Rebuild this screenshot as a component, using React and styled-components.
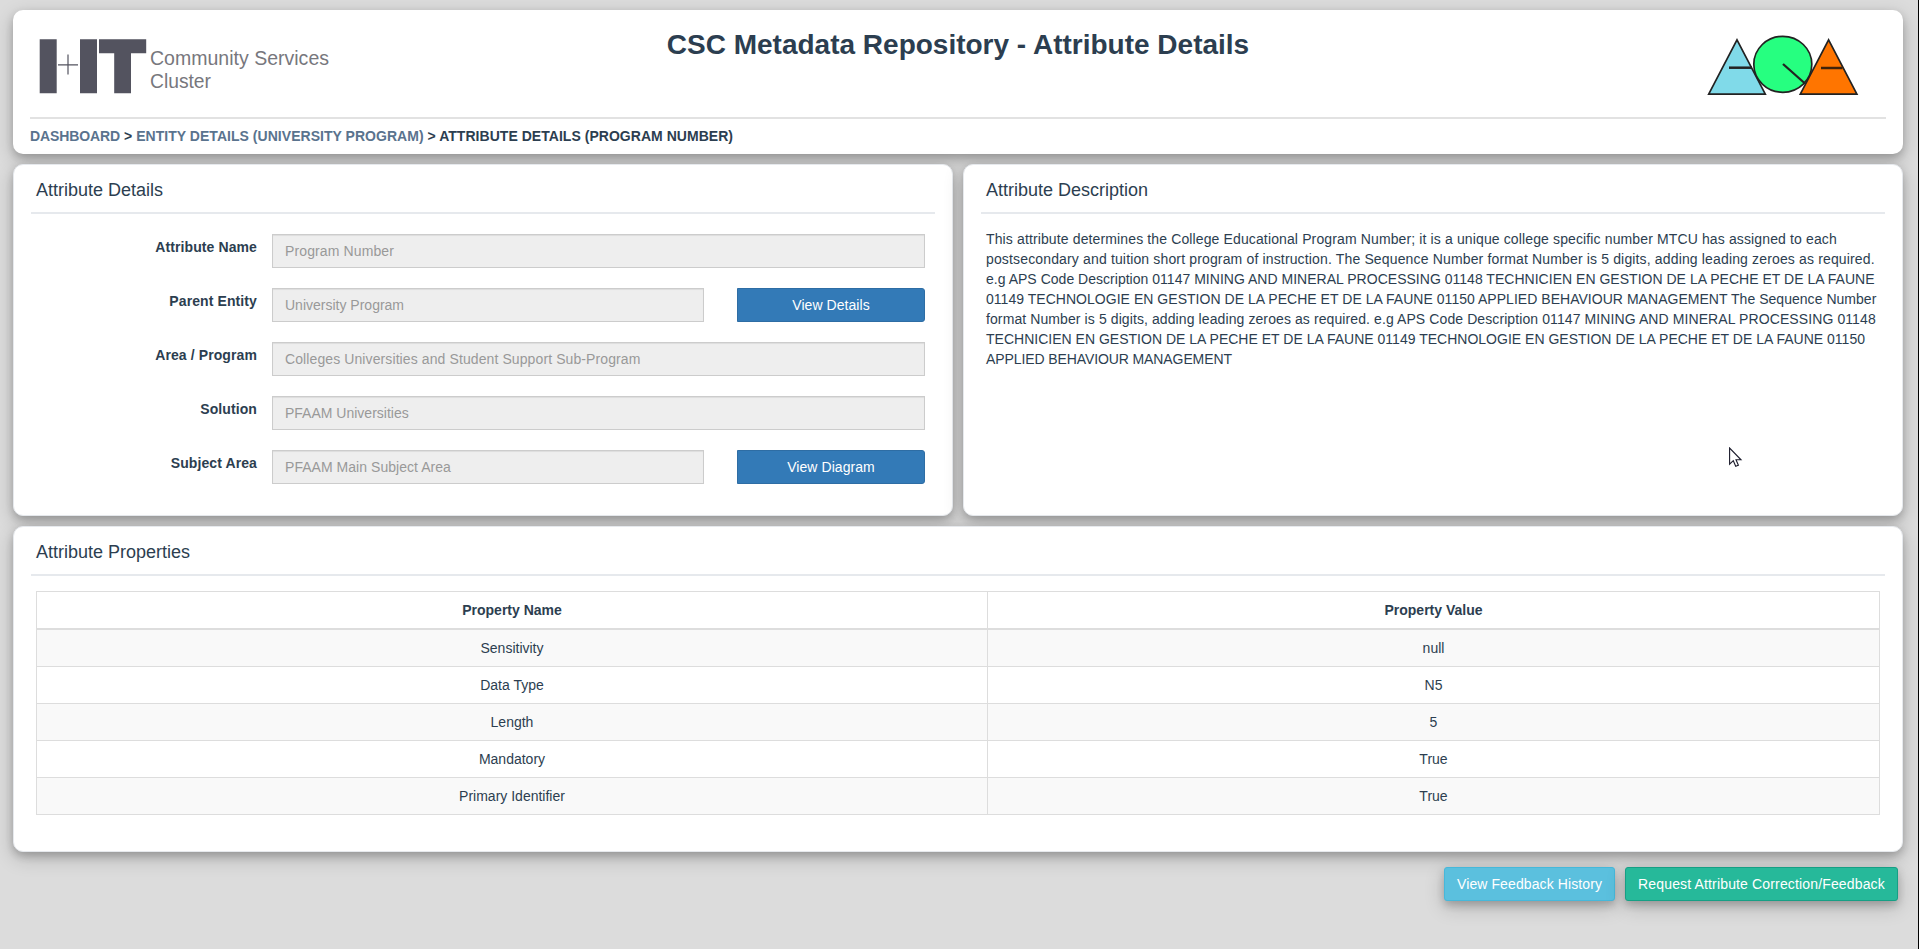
import React from "react";
import styled, { createGlobalStyle } from "styled-components";

const Global = createGlobalStyle`
  *, *::before, *::after { box-sizing: border-box; }
  html, body { margin: 0; height: 100%; overflow: hidden; }
  body {
    background: #dcdcdc;
    color: #2c3e50;
    font: 14px/20px "Liberation Sans", Arial, sans-serif;
  }
`;

const lift = "0 4px 8px 0 rgba(0,0,0,0.2), 0 6px 20px 0 rgba(0,0,0,0.19)";

const Page = styled.div`
  position: relative;
  height: 949px;
  padding: 10px 15px 0 13px;
  border-right: 1px solid #000;
  display: flex;
  flex-direction: column;
  gap: 10px;
`;

const Panel = styled.section`
  flex: ${(p) => p.$flex || "none"};
  min-width: 0;
  height: ${(p) => p.$height}px;
  padding: 15px 17px 0;
  background: #fff;
  border: 1px solid #e6e9ed;
  border-radius: 10px;
  box-shadow: ${lift};
`;

const HeaderPanel = styled.header`
  height: 144px;
  padding: 0 17px;
  background: #fff;
  border-radius: 10px;
  box-shadow: ${lift};
`;

const HeaderTop = styled.div`
  height: 109px;
  display: grid;
  grid-template-columns: 320px 1fr 320px;
  align-items: start;
  border-bottom: 2px solid #e2e2e2;
  svg { display: block; }
  svg:last-child { justify-self: end; }
`;

const PageTitle = styled.h1`
  margin: 19px 0 0;
  text-align: center;
  white-space: nowrap;
  font-size: 28px;
  line-height: 32px;
  font-weight: 700;
`;

const Breadcrumb = styled.nav`
  padding-top: 7px;
  font-weight: 700;
  white-space: nowrap;
  text-transform: uppercase;
  letter-spacing: 0.035px;
`;

const Crumb = styled.a`
  color: #5a738e;
  letter-spacing: ${(p) => p.$track || 0.035}px;
`;

const Columns = styled.div`
  display: flex;
  gap: 10px;
`;

const PanelTitle = styled.h2`
  margin: 0;
  height: 34px;
  padding: 0 5px;
  border-bottom: 2px solid #e6e9ed;
  font-size: 18px;
  line-height: 20px;
  font-weight: 400;
`;

const Form = styled.div`
  padding: 20px 10px 0 5px;
  display: flex;
  flex-direction: column;
  gap: 20px;
`;

const Field = styled.div`
  display: grid;
  grid-template-columns: 221px ${(p) => (p.$action ? "432px 188px" : "653px")};
  column-gap: 15px;
`;

const Label = styled.label`
  padding-top: 3px;
  text-align: right;
  font-weight: 700;
  letter-spacing: 0.1px;
`;

const Input = styled.div`
  height: 34px;
  padding: 6px 12px;
  background: #eee;
  border: 1px solid #ccc;
  box-shadow: inset 0 1px 1px rgba(0, 0, 0, 0.075);
  color: #999;
  letter-spacing: ${(p) => p.$track || 0}px;
`;

const Button = styled.button`
  height: 34px;
  width: ${(p) => (p.$width ? `${p.$width}px` : "auto")};
  margin-left: ${(p) => p.$indent || 0}px;
  padding: 0;
  font: inherit;
  letter-spacing: ${(p) => p.$track || 0}px;
  color: #fff;
  background: ${(p) => p.$bg};
  border: 1px solid ${(p) => p.$edge};
  border-radius: ${(p) => p.$radius || "3px"};
  box-shadow: ${(p) => (p.$raised ? lift : "none")};
`;

const Description = styled.p`
  margin: 0;
  padding: 15px 5px 0;
  white-space: pre;
`;

const Line = styled.span`
  display: block;
  letter-spacing: ${(p) => p.$track}px;
`;

const Table = styled.table`
  width: 1844px;
  margin: 15px 5px 0;
  border-collapse: collapse;
  table-layout: fixed;
  text-align: center;
  th, td { border: 1px solid #ddd; padding: 8px; }
  th:first-child { width: 951px; }
  th { border-bottom-width: 2px; }
  td { height: 37px; }
  tbody tr:nth-child(odd) { background: #f9f9f9; }
`;

const Actions = styled.div`
  padding: 5px 5px 0 0;
  display: flex;
  justify-content: flex-end;
  gap: 10px;
`;

const Pointer = styled.svg`
  position: absolute;
  left: 1729px;
  top: 447px;
`;

const ClusterLogo = () => (
  <svg width="310" height="100" viewBox="30 10 310 100">
    <g fill="#53535f">
      <path d="M39.7 39.3h17v54h-17zM80 39.3h17v54h-17zM99 39.3h47.2v14H131v40h-16.8v-40H99z" />
      <path d="M58 64.2h20v1.2H58zM67.4 54.5h1.2v20h-1.2z" />
    </g>
    <g fill="#77777d" fontSize="20.5" fontFamily="Liberation Sans, Arial, sans-serif">
      <text x="150" y="65.3" textLength="179" lengthAdjust="spacingAndGlyphs">Community Services</text>
      <text x="150" y="88" textLength="61" lengthAdjust="spacingAndGlyphs">Cluster</text>
    </g>
  </svg>
);

const ShapesLogo = () => (
  <svg width="190" height="100" viewBox="1696 10 190 100" stroke="#222" strokeWidth="1.7">
    <path d="M1737 39.9l28.3 54.3h-56.6z" fill="#80dae9" />
    <path d="M1729 67.7h23" strokeWidth="2.5" />
    <ellipse cx="1782.8" cy="64.3" rx="29" ry="28" fill="#26ff80" />
    <path d="M1783 64l22 19.5" strokeWidth="2.3" />
    <path d="M1828.6 39.9l28.3 54.3h-56.6z" fill="#ff7500" />
    <path d="M1821 68h21.5" strokeWidth="2.5" stroke="#40220a" />
  </svg>
);

const fields = [
  { label: "Attribute Name", value: "Program Number", track: 0.12 },
  { label: "Parent Entity", value: "University Program", action: "View Details" },
  { label: "Area / Program", value: "Colleges Universities and Student Support Sub-Program", track: 0.1 },
  { label: "Solution", value: "PFAAM Universities" },
  { label: "Subject Area", value: "PFAAM Main Subject Area", track: 0.04, action: "View Diagram" },
];

const description = [
  ["This attribute determines the College Educational Program Number; it is a unique college specific number MTCU has assigned to each", 0.128],
  ["postsecondary and tuition short program of instruction. The Sequence Number format Number is 5 digits, adding leading zeroes as required.", 0.15],
  ["e.g APS Code Description 01147 MINING AND MINERAL PROCESSING 01148 TECHNICIEN EN GESTION DE LA PECHE ET DE LA FAUNE", 0.02],
  ["01149 TECHNOLOGIE EN GESTION DE LA PECHE ET DE LA FAUNE 01150 APPLIED BEHAVIOUR MANAGEMENT The Sequence Number", 0.033],
  ["format Number is 5 digits, adding leading zeroes as required. e.g APS Code Description 01147 MINING AND MINERAL PROCESSING 01148", 0.096],
  ["TECHNICIEN EN GESTION DE LA PECHE ET DE LA FAUNE 01149 TECHNOLOGIE EN GESTION DE LA PECHE ET DE LA FAUNE 01150", 0.01],
  ["APPLIED BEHAVIOUR MANAGEMENT", -0.1],
];

const properties = [
  ["Sensitivity", "null"],
  ["Data Type", "N5"],
  ["Length", "5"],
  ["Mandatory", "True"],
  ["Primary Identifier", "True"],
];

export default function App() {
  return (
    <Page>
      <Global />
      <HeaderPanel>
        <HeaderTop>
          <ClusterLogo />
          <PageTitle>CSC Metadata Repository - Attribute Details</PageTitle>
          <ShapesLogo />
        </HeaderTop>
        <Breadcrumb>
          <Crumb $track={-0.1}>Dashboard</Crumb> &gt; <Crumb>Entity Details (University Program)</Crumb> &gt; Attribute Details (Program Number)
        </Breadcrumb>
      </HeaderPanel>
      <Columns>
        <Panel $flex="1" $height={352}>
          <PanelTitle>Attribute Details</PanelTitle>
          <Form>
            {fields.map(({ label, value, track, action }) => (
              <Field key={label} $action={action}>
                <Label>{label}</Label>
                <Input $track={track}>{value}</Input>
                {action && (
                  <Button $bg="#337ab7" $edge="#2e6da4" $radius="0 3px 3px 0" $indent={18} $width={188} $track={0.06}>
                    {action}
                  </Button>
                )}
              </Field>
            ))}
          </Form>
        </Panel>
        <Panel $flex="1" $height={352}>
          <PanelTitle>Attribute Description</PanelTitle>
          <Description>
            {description.map(([text, track]) => (
              <Line key={text} $track={track}>{text}</Line>
            ))}
          </Description>
        </Panel>
      </Columns>
      <Panel $height={326}>
        <PanelTitle>Attribute Properties</PanelTitle>
        <Table>
          <thead>
            <tr><th>Property Name</th><th>Property Value</th></tr>
          </thead>
          <tbody>
            {properties.map(([name, value]) => (
              <tr key={name}><td>{name}</td><td>{value}</td></tr>
            ))}
          </tbody>
        </Table>
      </Panel>
      <Actions>
        <Button $raised $bg="#5bc0de" $edge="#46b8da" $width={171} $track={0.1}>View Feedback History</Button>
        <Button $raised $bg="#26b99a" $edge="#169f85" $width={273} $track={0.15}>Request Attribute Correction/Feedback</Button>
      </Actions>
      <Pointer width="14" height="21" viewBox="0 0 14 21">
        <path d="M.6 1v16.2l3.7-3.5 2.4 5.6 2.7-1.1-2.4-5.4h5z" fill="#fff" stroke="#1a1a2a" strokeWidth="1.1" />
      </Pointer>
    </Page>
  );
}
